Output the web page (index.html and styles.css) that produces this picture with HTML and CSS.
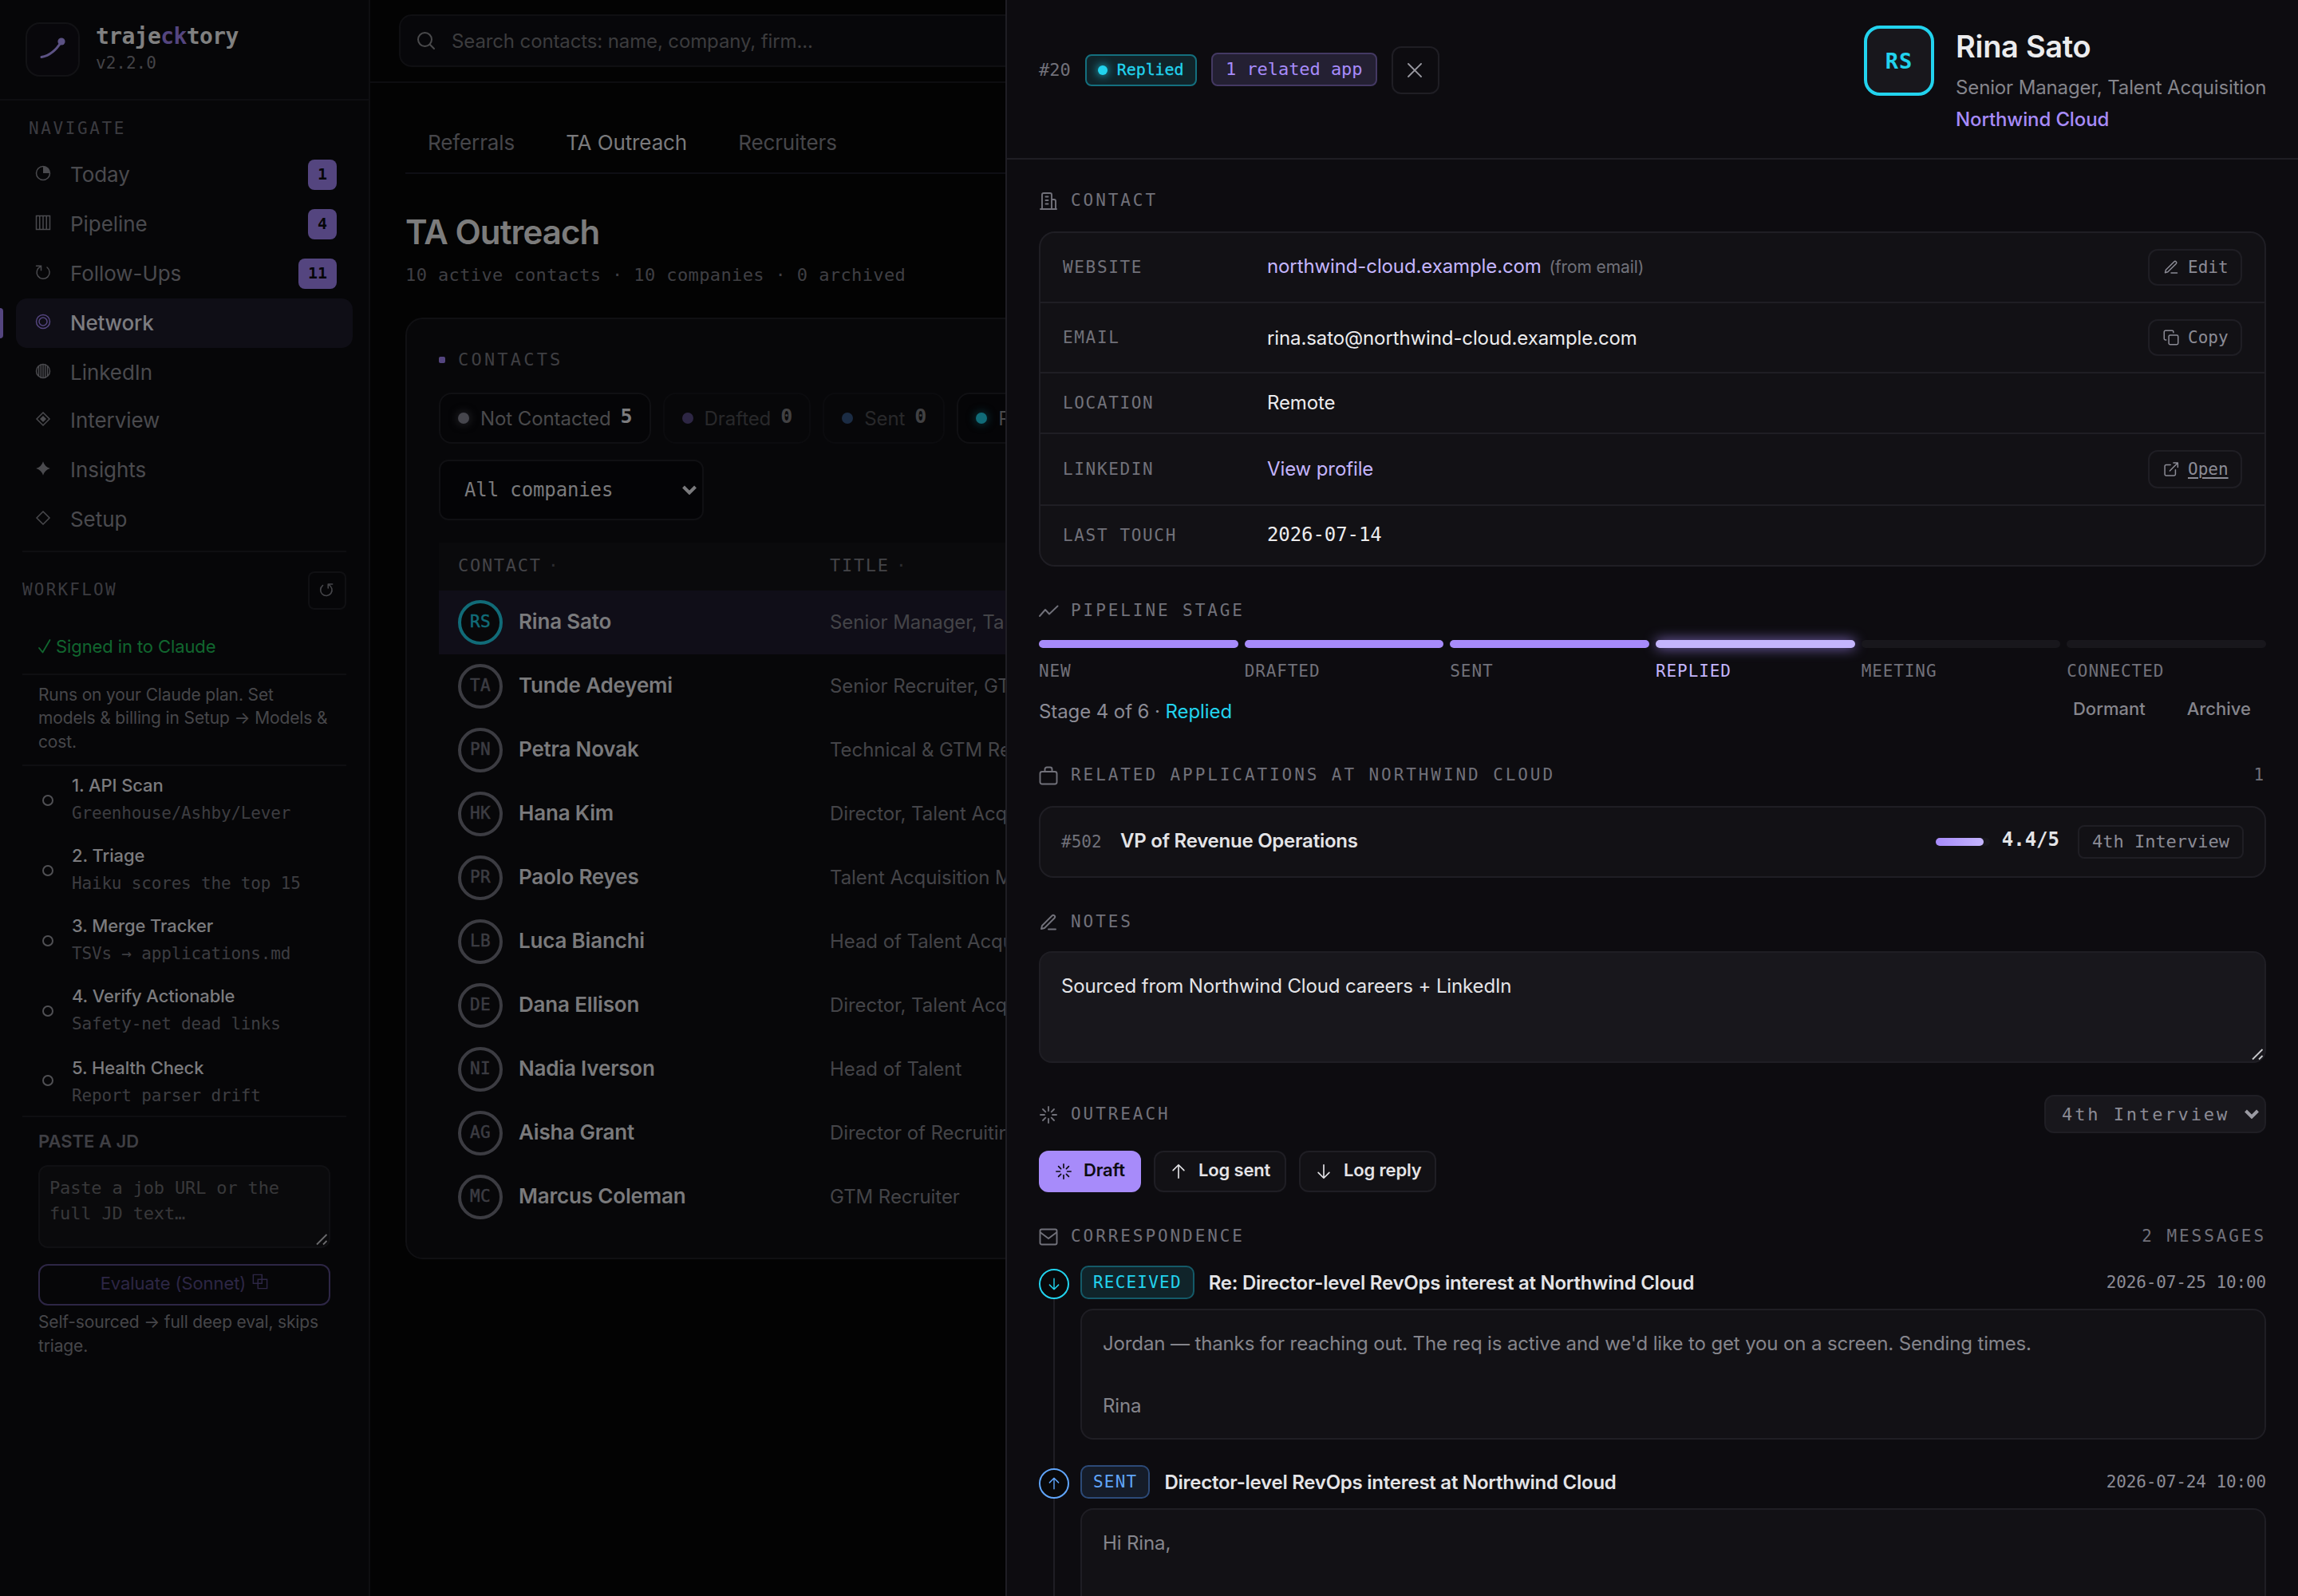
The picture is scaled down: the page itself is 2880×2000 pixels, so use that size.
FILE: index.html
```html
<!DOCTYPE html>
<html lang="en">
<head>
<meta charset="utf-8">
<title>trajecktory</title>
<link rel="stylesheet" href="styles.css">
</head>
<body>
<svg class="defs" width="0" height="0">
  <symbol id="i-edit" viewBox="0 0 24 24"><path d="M12 20.5h9M16.5 3.5a2.12 2.12 0 0 1 3 3L7 19l-4 1 1-4Z"/></symbol>
  <symbol id="i-copy" viewBox="0 0 24 24"><rect x="8.5" y="8.5" width="14" height="14" rx="2"/><path d="M4.5 15.5h-1a2 2 0 0 1-2-2v-10a2 2 0 0 1 2-2h10a2 2 0 0 1 2 2v1"/></symbol>
  <symbol id="i-open" viewBox="0 0 24 24"><path d="M18.5 13v6.5a2 2 0 0 1-2 2h-12a2 2 0 0 1-2-2v-12a2 2 0 0 1 2-2H11M15.500 2.500h6.500V9M10 14.500l12-12"/></symbol>
  <symbol id="i-spark" viewBox="0 0 24 24"><path d="M12 2v5M12 17v5M2 12h5M17 12h5M5 5l3.300 3.300M15.700 15.700L19 19M5 19l3.300-3.300M15.700 8.300L19 5"/></symbol>
  <symbol id="i-up" viewBox="0 0 24 24"><path d="M12 21V3M4.500 10.500L12 3l7.500 7.500"/></symbol>
  <symbol id="i-down" viewBox="0 0 24 24"><path d="M12 3v18M4.500 13.500L12 21l7.500-7.500"/></symbol>
  <symbol id="i-chevron" viewBox="0 0 18 12"><path d="M1.500 2l7.500 7.500L16.500 2"/></symbol>
  <symbol id="i-grip" viewBox="0 0 16 16"><path d="M2 14.500L14.500 2M10 14.500l4.500-4.500"/></symbol>
</svg>

<div class="app">
  <aside class="sidebar">
    <header class="brand">
      <div class="logo"><svg width="36" height="36" viewBox="0 0 36 36"><path d="M4 27.500C15 25.500 23 18 29 8" fill="none" stroke="currentColor" stroke-width="3" stroke-linecap="round"/><circle cx="29" cy="8" r="4.600" fill="currentColor"/></svg></div>
      <div class="brand-text">
        <div class="brand-name">traje<b>ck</b>tory</div>
        <div class="brand-version">v2.2.0</div>
      </div>
    </header>
    <div class="nav-label">NAVIGATE</div>
    <nav class="nav">
      <a class="nav-item"><svg viewBox="0 0 20 20"><circle cx="10" cy="10" r="8.500"/><path class="fill" d="M10 10V1.500A8.500 8.500 0 0 1 18.500 10Z"/></svg>Today<span class="badge">1</span></a>
      <a class="nav-item"><svg viewBox="0 0 20 20"><path d="M1.500 1.500h17v17h-17ZM5.750 1.500v17M10 1.500v17M14.250 1.500v17"/></svg>Pipeline<span class="badge">4</span></a>
      <a class="nav-item"><svg viewBox="0 0 20 20"><path d="M6.500 3.200A8 8 0 1 0 15 4M1.500 2.200h6v5.500"/></svg>Follow-Ups<span class="badge">11</span></a>
      <a class="nav-item active"><svg viewBox="0 0 20 20"><circle cx="10" cy="10" r="8.500"/><circle cx="10" cy="10" r="5"/></svg>Network</a>
      <a class="nav-item short"><svg viewBox="0 0 20 20"><circle cx="10" cy="10" r="8.500"/><path d="M4.500 4v12M7.300 2v16M10 1.500v17M12.700 2v16M15.500 4v12"/></svg>LinkedIn</a>
      <a class="nav-item"><svg viewBox="0 0 20 20"><path d="M10 2l8 8-8 8-8-8Z"/><path class="fill" d="M10 6l4 4-4 4L6 10Z"/></svg>Interview</a>
      <a class="nav-item"><svg viewBox="0 0 20 20"><path class="fill" d="M10 1.200Q12 8 18.800 10Q12 12 10 18.800Q8 12 1.200 10Q8 8 10 1.200Z"/><path class="fill" d="M10 5l5 5-5 5-5-5Z"/></svg>Insights</a>
      <a class="nav-item"><svg viewBox="0 0 20 20"><path d="M10 2l8 8-8 8-8-8Z"/></svg>Setup</a>
    </nav>
    <section class="workflow">
      <div class="wf-head"><span>WORKFLOW</span><button class="wf-refresh"><svg width="18" height="18" viewBox="0 0 20 20"><path d="M13.500 3.200A8 8 0 1 1 5 4M18.500 2.200h-6v5.500"/></svg></button></div>
      <div class="wf-status"><svg width="16" height="18" viewBox="0 0 16 18"><path d="M1 11l4.500 5.500L14.500 1"/></svg>Signed in to Claude</div>
      <p class="wf-note">Runs on your Claude plan. Set models &amp; billing in Setup → Models &amp; cost.</p>
      <ol class="steps">
        <li><i></i><div><b>1. API Scan</b><span>Greenhouse/Ashby/Lever</span></div></li>
        <li><i></i><div><b>2. Triage</b><span>Haiku scores the top 15</span></div></li>
        <li><i></i><div><b>3. Merge Tracker</b><span>TSVs → applications.md</span></div></li>
        <li><i></i><div><b>4. Verify Actionable</b><span>Safety-net dead links</span></div></li>
        <li><i></i><div><b>5. Health Check</b><span>Report parser drift</span></div></li>
      </ol>
      <div class="paste">
        <div class="paste-label">PASTE A JD</div>
        <div class="paste-box">Paste a job URL or the full JD text…<svg class="grip" width="16" height="16"><use href="#i-grip"/></svg></div>
        <button class="evaluate">Evaluate (Sonnet)<svg width="20" height="20" viewBox="0 0 22 22"><path d="M1.500 1.500h12v12h-12ZM8 8h12.500v12.500H8Z"/></svg></button>
        <p class="paste-note">Self-sourced → full deep eval, skips triage.</p>
      </div>
    </section>
  </aside>

  <main class="main">
    <header class="topbar">
      <div class="search"><svg width="24" height="24" viewBox="0 0 24 24"><circle cx="10.500" cy="10.500" r="8.500"/><path d="M16.800 16.800l5.200 5.200"/></svg>Search contacts: name, company, firm...</div>
    </header>
    <div class="content">
      <div class="tabs"><a>Referrals</a><a class="on">TA Outreach</a><a>Recruiters</a></div>
      <h1>TA Outreach</h1>
      <div class="subtitle">10 active contacts · 10 companies · 0 archived</div>
      <section class="card">
        <div class="card-head"><i></i>CONTACTS</div>
        <div class="chips">
          <div class="chip grey"><i></i>Not Contacted<b>5</b></div>
          <div class="chip violet dim"><i></i>Drafted<b>0</b></div>
          <div class="chip blue dim"><i></i>Sent<b>0</b></div>
          <div class="chip cyan"><i></i>Replied</div>
        </div>
        <div class="company-select">All companies<svg width="18" height="12"><use href="#i-chevron"/></svg></div>
        <div class="table">
          <div class="tr th"><span class="col">CONTACT<em>·</em></span><span class="col">TITLE<em>·</em></span></div>
          <div class="tr selected"><span class="who"><i>RS</i><b>Rina Sato</b></span><span class="role">Senior Manager, Talent</span></div>
          <div class="tr"><span class="who"><i>TA</i><b>Tunde Adeyemi</b></span><span class="role">Senior Recruiter, GTM</span></div>
          <div class="tr"><span class="who"><i>PN</i><b>Petra Novak</b></span><span class="role">Technical &amp; GTM Rec</span></div>
          <div class="tr"><span class="who"><i>HK</i><b>Hana Kim</b></span><span class="role">Director, Talent Acqui</span></div>
          <div class="tr"><span class="who"><i>PR</i><b>Paolo Reyes</b></span><span class="role">Talent Acquisition Ma</span></div>
          <div class="tr"><span class="who"><i>LB</i><b>Luca Bianchi</b></span><span class="role">Head of Talent Acqui</span></div>
          <div class="tr"><span class="who"><i>DE</i><b>Dana Ellison</b></span><span class="role">Director, Talent Acqui</span></div>
          <div class="tr"><span class="who"><i>NI</i><b>Nadia Iverson</b></span><span class="role">Head of Talent</span></div>
          <div class="tr"><span class="who"><i>AG</i><b>Aisha Grant</b></span><span class="role">Director of Recruiting</span></div>
          <div class="tr"><span class="who"><i>MC</i><b>Marcus Coleman</b></span><span class="role">GTM Recruiter</span></div>
        </div>
      </section>
    </div>
  </main>
</div>

<aside class="drawer">
  <header class="d-head">
    <div class="d-meta">
      <span class="d-id">#20</span>
      <span class="pill pill-replied"><i></i>Replied</span>
      <span class="pill pill-related">1 related app</span>
      <button class="close"><svg width="20" height="20" viewBox="0 0 20 20"><path d="M2 2l16 16M18 2L2 18"/></svg></button>
    </div>
    <div class="person">
      <div class="p-avatar">RS</div>
      <div class="p-text">
        <h2>Rina Sato</h2>
        <div class="p-role">Senior Manager, Talent Acquisition</div>
        <div class="p-company">Northwind Cloud</div>
      </div>
    </div>
  </header>

  <div class="d-body">
    <section>
      <div class="s-head"><svg viewBox="0 0 24 24"><path d="M4 22V4a2 2 0 0 1 2-2h8a2 2 0 0 1 2 2v18M16 10h3a2 2 0 0 1 2 2v10M2 22h20M8.500 6.500h3M8.500 11h3M8.500 15.500h3"/></svg>CONTACT</div>
      <div class="fields">
        <div class="field h86 high"><label>WEBSITE</label><div><a>northwind-cloud.example.com</a> <small>(from email)</small></div><button><svg><use href="#i-edit"/></svg>Edit</button></div>
        <div class="field h86 low"><label>EMAIL</label><div>rina.sato@northwind-cloud.example.com</div><button><svg><use href="#i-copy"/></svg>Copy</button></div>
        <div class="field h74"><label>LOCATION</label><div>Remote</div></div>
        <div class="field h88"><label>LINKEDIN</label><div><a>View profile</a></div><button class="tall"><svg><use href="#i-open"/></svg><u>Open</u></button></div>
        <div class="field h74 high"><label>LAST TOUCH</label><div class="mono">2026-07-14</div></div>
      </div>
    </section>

    <section>
      <div class="s-head tight"><svg viewBox="0 0 24 24"><path d="M1 18l7-8 5 5.500L23.500 5.500"/></svg>PIPELINE STAGE</div>
      <div class="stages">
        <div class="stage done"><i></i>NEW</div>
        <div class="stage done"><i></i>DRAFTED</div>
        <div class="stage done"><i></i>SENT</div>
        <div class="stage now"><i></i>REPLIED</div>
        <div class="stage"><i></i>MEETING</div>
        <div class="stage"><i></i>CONNECTED</div>
      </div>
      <div class="stage-foot"><span>Stage 4 of 6 · <b>Replied</b></span><div class="ghosts"><button>Dormant</button><button>Archive</button></div></div>
    </section>

    <section>
      <div class="s-head"><svg viewBox="0 0 24 24"><rect x="1.500" y="7" width="21" height="15.500" rx="2.500"/><path d="M7.500 7V4a2.500 2.500 0 0 1 2.500-2.500h4A2.500 2.500 0 0 1 16.500 4v3"/></svg>RELATED APPLICATIONS AT NORTHWIND CLOUD<span class="count">1</span></div>
      <div class="related">
        <span class="r-id">#502</span><b class="r-title">VP of Revenue Operations</b>
        <div class="meter"><i style="width:88%"></i></div><b class="score">4.4/5</b><span class="r-stage">4th Interview</span>
      </div>
    </section>

    <section>
      <div class="s-head tight"><svg><use href="#i-edit"/></svg>NOTES</div>
      <div class="notes">Sourced from Northwind Cloud careers + LinkedIn<svg class="grip" width="16" height="16"><use href="#i-grip"/></svg></div>
    </section>

    <section>
      <div class="s-head tight tall"><svg><use href="#i-spark"/></svg>OUTREACH<span class="stage-select">4th Interview<svg width="18" height="12"><use href="#i-chevron"/></svg></span></div>
      <div class="actions">
        <button class="primary"><svg><use href="#i-spark"/></svg>Draft</button>
        <button class="sent"><svg><use href="#i-up"/></svg>Log sent</button>
        <button class="reply"><svg><use href="#i-down"/></svg>Log reply</button>
      </div>
    </section>

    <section>
      <div class="s-head tight"><svg viewBox="0 0 24 24"><rect x="1.500" y="2.500" width="21" height="19" rx="2"/><path d="M2 6.500l10 7.500 10-7.500"/></svg>CORRESPONDENCE<span class="count">2 MESSAGES</span></div>
      <ul class="thread">
        <li class="in">
          <div class="rail"><span><svg><use href="#i-down"/></svg></span></div>
          <div class="msg">
            <div class="m-head"><span class="tag">RECEIVED</span><b>Re: Director-level RevOps interest at Northwind Cloud</b><time>2026-07-25 10:00</time></div>
            <div class="m-body">Jordan — thanks for reaching out. The req is active and we'd like to get you on a screen. Sending times.

Rina</div>
          </div>
        </li>
        <li class="out">
          <div class="rail"><span><svg><use href="#i-up"/></svg></span></div>
          <div class="msg">
            <div class="m-head"><span class="tag">SENT</span><b>Director-level RevOps interest at Northwind Cloud</b><time>2026-07-24 10:00</time></div>
            <div class="m-body long">Hi Rina,</div>
          </div>
        </li>
      </ul>
    </section>
  </div>
</aside>
</body>
</html>
```
FILE: styles.css
```css
* { box-sizing: border-box; }

:root {
  --sans: Inter, "Liberation Sans", sans-serif;
  --mono: "DejaVu Sans Mono", "Liberation Mono", monospace;
  --line: #1f1e24;
  --muted: #8b8b95;
  --faint: #71717a;
  --violet: #a78bfa;
  --lilac: #c4b5fd;
  --cyan: #22d3ee;
  --blue: #60a5fa;
}

body {
  margin: 0;
  width: 2880px;
  height: 2000px;
  overflow: hidden;
  background: #030303;
  font-family: var(--sans);
  font-size: 24px;
  color: #e4e4e7;
  position: relative;
}

h1, h2, p, ol, ul { margin: 0; padding: 0; font-weight: inherit; }
ul, ol { list-style: none; }
i, em { font-style: normal; }
svg { fill: none; stroke: currentColor; stroke-width: 1.8; stroke-linecap: round; stroke-linejoin: round; flex: none; overflow: visible; }
svg .fill { fill: currentColor; stroke: none; }
button { margin: 0; padding: 0; border: 0; background: none; font: inherit; color: inherit; }
.defs { position: absolute; }
.mono { font-family: var(--mono); }

.app { display: flex; height: 2000px; }

/* sidebar */
.sidebar { width: 464px; flex: none; background: #060608; border-right: 2px solid #0e0e11; }
.brand { height: 126px; padding: 28px 32px; display: flex; gap: 20px; border-bottom: 2px solid #0e0e11; }
.logo { width: 68px; height: 68px; border: 2px solid #121215; border-radius: 18px; background: #08070b; color: #5c5284; display: flex; align-items: center; justify-content: center; }
.logo svg { stroke: none; }
.brand-name { font: bold 28px/36px var(--mono); letter-spacing: -0.62px; color: #808080; }
.brand-name b { color: #54457f; }
.brand-version { font: 21px/28px var(--mono); margin-top: 1px; color: #434347; }
.nav-label { font: 21px/30px var(--mono); letter-spacing: 2.600px; padding: 20px 36px 12px; color: #3b3b40; }
.nav { padding: 0 20px; }
.nav-item { height: 62px; padding: 0 20px 2px 24px; display: flex; align-items: center; gap: 24px; font-size: 26px; letter-spacing: -0.060px; color: #4a4a4e; border-radius: 14px; position: relative; }
.nav-item.short { height: 60px; padding-bottom: 0; }
.nav-item svg { width: 20px; height: 20px; stroke-width: 1.500; margin-bottom: 2px; stroke-linejoin: miter; }
.nav-item.active { background: #0f0e16; color: #7c7c80; font-weight: 500; letter-spacing: -0.200px; }
.nav-item.active svg { color: #54457f; }
.nav-item.active::before { content: ""; position: absolute; left: -20px; top: 12px; width: 4px; height: 38px; background: #54457f; border-radius: 0 4px 4px 0; }
.badge { margin: 2px 0 0 auto; height: 38px; padding: 0 12px; border-radius: 8px; background: #54457f; color: #060608; font: bold 20px/36px var(--mono); letter-spacing: 0; }

.workflow { margin: 8px 28px 0; border-top: 2px solid #0e0e11; }
.wf-head { padding-top: 24px; display: flex; justify-content: space-between; align-items: center; font: 21px/43px var(--mono); letter-spacing: 2.200px; color: #3b3b40; }
.wf-head span { padding-bottom: 1px; }
.wf-refresh { width: 48px; height: 48px; padding: 0 2px 2px 0; border: 2px solid #101013; border-radius: 8px; display: flex; align-items: center; justify-content: center; color: #46464a; }
.wf-status { margin-top: 10px; height: 72px; padding: 2px 20px 0; border-bottom: 2px solid #0e0e11; display: flex; align-items: center; gap: 6px; font-size: 22px; letter-spacing: -0.100px; color: #11662f; }
.wf-note { padding: 10px 20px 14px; border-bottom: 2px solid #0e0e11; font-size: 21px; line-height: 29.400px; letter-spacing: -0.140px; color: #46464a; }
.steps li { height: 88px; padding: 7px 0 0 25px; display: flex; gap: 23px; }
.steps li:last-child { padding-top: 9px; }
.steps i { width: 14px; height: 14px; margin-top: 29px; border: 2px solid #505054; border-radius: 50%; }
.steps li:last-child i { margin-top: 26px; }
.steps b { display: block; font-size: 22px; line-height: 34px; font-weight: 500; letter-spacing: -0.120px; color: #7b7b7e; }
.steps span { display: block; font: 21px/36px var(--mono); letter-spacing: -0.180px; color: #3d3d41; }
.paste { padding: 13px 20px 0; border-top: 2px solid #0e0e11; margin-top: -2px; }
.paste-label { font-size: 22px; line-height: 34px; font-weight: 600; color: #3f3f44; }
.paste-box { margin-top: 13px; height: 104px; padding: 11px 12px; border: 2px solid #101013; border-radius: 12px; background: #0a0a0c; font: 22px/32px var(--mono); letter-spacing: -0.160px; color: #38383a; position: relative; }
.grip { position: absolute; right: 1px; bottom: 1px; color: #6b6b6e; stroke-linecap: butt; }
.evaluate { margin-top: 20px; width: 366px; height: 52px; border: 2px solid #2d2645; border-radius: 12px; display: flex; align-items: center; justify-content: center; gap: 8px; padding-bottom: 4px; font-size: 22px; letter-spacing: -0.080px; color: #2d2645; }
.evaluate svg { stroke-width: 1.600; stroke-linejoin: miter; margin-bottom: 4px; }
.paste-note { margin-top: 6px; font-size: 21px; line-height: 30px; letter-spacing: -0.160px; color: #46464a; }

/* main column */
.main { flex: 1; min-width: 0; }
.topbar { height: 104px; padding: 18px 36px; border-bottom: 2px solid #0d0d10; }
.search { height: 66px; padding: 0 20px; border: 2px solid #0f0f12; border-radius: 16px; background: #07070a; display: flex; align-items: center; gap: 20px; font-size: 24px; letter-spacing: -0.120px; color: #3c3c3e; }
.search svg { color: #4a4a4c; stroke-width: 2; }
.content { padding: 36px 44px 0; }
.tabs { height: 78px; border-bottom: 2px solid #0e0e14; display: flex; align-items: center; gap: 8px; font-size: 26px; letter-spacing: -0.110px; color: #46464a; }
.tabs a { padding: 0 28px; }
.tabs .on { color: #7a7a7c; }
h1 { margin-top: 48px; font-size: 42px; line-height: 50px; font-weight: 600; letter-spacing: -0.900px; color: #7c7c7c; }
.subtitle { margin: 13px 0 37px; font: 22px/32px var(--mono); letter-spacing: 0.390px; color: #3f3f43; }
.card { height: 1180px; padding: 34px 40px 0; border: 2px solid #101013; border-radius: 22px; background: #070709; }
.card-head { display: flex; align-items: center; gap: 16px; font: 22px/34px var(--mono); letter-spacing: 3.200px; color: #3f3f43; }
.card-head i { width: 8px; height: 8px; border-radius: 2px; background: #54457f; }
.chips { margin-top: 24px; display: flex; gap: 15px; }
.chip { height: 64px; padding: 0 21px 0 22px; display: flex; align-items: center; gap: 12px; border: 2px solid #101013; border-radius: 16px; background: #050507; white-space: nowrap; letter-spacing: -0.080px; color: #4a4a4c; }
.chip i { width: 14px; height: 14px; margin-right: 2px; border-radius: 50%; }
.chip b { font: bold 25px/60px var(--mono); padding-bottom: 5px; color: #7c7c7e; }
.chip.dim { opacity: .5; background: none; }
.grey i { background: #46464d; box-shadow: 0 0 12px #2e2e33; }
.violet i { background: #54457f; }
.blue i { background: #305280; }
.cyan i { background: #116b78; box-shadow: 0 0 12px #0b4650; }
.company-select { margin-top: 20px; width: 332px; height: 76px; padding: 0 7px 0 30px; display: flex; align-items: center; justify-content: space-between; border: 2px solid #101013; border-radius: 12px; background: #040406; font: 24px/72px var(--mono); letter-spacing: -0.120px; color: #7a7a7c; }
.company-select svg { stroke-width: 4; stroke-linecap: butt; stroke-linejoin: miter; }
.table { margin-top: 28px; }
.tr { height: 80px; padding: 0 24px 3px; display: grid; grid-template-columns: 466px 1fr; align-items: center; font-size: 24px; color: #444448; white-space: nowrap; }
.role { padding-top: 1px; letter-spacing: -0.060px; }
.th { height: 60px; background: #0a0a0c; font: 22px/54px var(--mono); letter-spacing: 1.700px; color: #444448; }
.col { display: flex; gap: 8px; }
.th em { color: #2c2c30; }
.selected { background: #100e18; }
.who { display: flex; align-items: center; gap: 20px; }
.who i { width: 56px; height: 56px; border: 4px solid #3c3c42; border-radius: 50%; margin-top: 3px; text-align: center; font: 21px/46px var(--mono); letter-spacing: 0.400px; -webkit-text-stroke: 0.500px; color: #3c3c42; }
.who b { font-size: 26px; font-weight: 600; letter-spacing: -0.180px; color: #7a7a7c; }
.selected .who i { border-color: #116b78; color: #116b78; background: #08080a; }

/* contact drawer */
.drawer { position: absolute; top: 0; right: 0; width: 1620px; height: 2000px; overflow: hidden; background: #0d0c10; border-left: 2px solid var(--line); }
.d-head { height: 200px; padding: 32px 40px 0; border-bottom: 2px solid var(--line); display: flex; justify-content: space-between; }
.d-meta { height: 112px; display: flex; align-items: center; gap: 18px; }
.d-id { font: 22px/40px var(--mono); color: var(--faint); }
.pill { border: 2px solid; border-radius: 8px; font-family: var(--mono); }
.pill-replied { width: 140px; height: 40px; padding: 0 0 2px 14px; display: flex; align-items: center; gap: 12px; font-size: 20px; letter-spacing: -0.080px; -webkit-text-stroke: 0.300px; color: var(--cyan); border-color: #146f7e; background: #10242a; }
.pill-replied i { width: 12px; height: 12px; margin-top: 2px; border-radius: 50%; background: var(--cyan); box-shadow: 0 0 12px var(--cyan); }
.pill-related { width: 208px; height: 42px; margin-top: -2px; text-align: center; font-size: 22px; line-height: 38px; letter-spacing: -0.060px; color: var(--violet); border-color: #443963; background: #242033; }
.close { width: 60px; height: 60px; border: 2px solid var(--line); border-radius: 12px; display: flex; align-items: center; justify-content: center; padding-right: 1px; color: #9a9aa2; }
.person { display: flex; gap: 27px; }
.p-avatar { width: 88px; height: 88px; border: 4px solid var(--cyan); border-radius: 20px; background: #18171c; color: var(--cyan); text-align: center; font: bold 27px/81px var(--mono); letter-spacing: 1px; }
.p-text { width: 389px; white-space: nowrap; }
.p-text h2 { margin-top: 3px; font-size: 38px; line-height: 46px; font-weight: 600; letter-spacing: -0.300px; color: #ececee; }
.p-role { margin-top: 11px; line-height: 36px; letter-spacing: -0.130px; color: #85858c; }
.p-company { margin-top: 4px; line-height: 36px; font-weight: 500; letter-spacing: -0.120px; color: var(--violet); }

.d-body { padding: 36px 40px 0; display: flex; flex-direction: column; gap: 40px; }
.s-head { height: 30px; margin-bottom: 24px; display: flex; align-items: center; font: 21px/30px var(--mono); letter-spacing: 2.920px; color: var(--faint); }
.s-head > svg { width: 24px; height: 24px; margin: 2px 16px 0 0; stroke-width: 1.900; }
.s-head.tight { margin-bottom: 22px; }
.s-head.tall { height: 48px; line-height: 29px; }
.s-head .count { margin-left: auto; }

.fields { height: 420px; border: 2px solid var(--line); border-radius: 20px; background: #121115; }
.field { padding: 0 28px; display: flex; align-items: center; box-sizing: content-box; }
.field + .field { border-top: 2px solid var(--line); }
.h74 { height: 74px; } .h86 { height: 86px; } .h88 { height: 88px; }
.field label { width: 256px; font: 21px/30px var(--mono); letter-spacing: 1.650px; color: var(--faint); }
.field > div { flex: 1; letter-spacing: -0.110px; line-height: 36px; color: #ececee; }
.field > div.mono { letter-spacing: -0.080px; }
.field.low > div { padding-top: 2px; }
.field.high > div { padding-bottom: 2px; }
.field a { color: var(--lilac); margin-right: 3px; }
.field small { font-size: 21px; color: var(--faint); }
.field button { width: 118px; height: 46px; padding-left: 17px; display: flex; align-items: center; gap: 11px; border: 2px solid var(--line); border-radius: 12px; font: 21px/42px var(--mono); color: var(--muted); }
.field button.tall { height: 48px; }
.field button svg { width: 20px; height: 20px; }
.field u { text-underline-offset: 3px; text-decoration-thickness: 2px; }

.stages { display: grid; grid-template-columns: repeat(6, 1fr); gap: 8px; }
.stage { font: 21px/28px var(--mono); letter-spacing: 0.900px; color: var(--faint); }
.stage i { display: block; height: 10px; margin-bottom: 15px; border-radius: 5px; background: #18171c; }
.stage.done i { background: var(--violet); }
.stage.now { color: var(--lilac); }
.stage.now i { background: var(--lilac); box-shadow: 0 0 16px rgba(167, 139, 250, .8); }
.stage-foot { height: 48px; margin-top: 13px; display: flex; align-items: center; justify-content: space-between; color: var(--muted); }
.stage-foot > span { padding-bottom: 2px; letter-spacing: -0.090px; }
.stage-foot b { font-weight: 400; color: var(--cyan); }
.ghosts { display: flex; gap: 12px; margin-right: -1px; padding-bottom: 8px; font-size: 22px; font-weight: 500; color: #85858c; }
.ghosts button { padding: 0 20px; }

.related { height: 90px; padding: 0 26px; display: flex; align-items: center; border: 2px solid var(--line); border-radius: 18px; background: #121115; }
.r-id { width: 74px; font: 21px/30px var(--mono); color: var(--faint); }
.r-title { flex: 1; padding-bottom: 3px; font-weight: 600; letter-spacing: -0.240px; }
.meter { width: 68px; height: 10px; border-radius: 5px; background: #18171c; }
.meter i { display: block; height: 10px; border-radius: 5px; background: linear-gradient(90deg, var(--violet), var(--lilac)); }
.score { margin: 0 23px 0 15px; padding-bottom: 6px; font: bold 24px/30px var(--mono); }
.r-stage { width: 208px; height: 42px; border: 2px solid var(--line); border-radius: 8px; text-align: center; font: 22px/38px var(--mono); color: var(--muted); }

.notes { height: 140px; padding: 22px 26px; border: 2px solid var(--line); border-radius: 16px; background: #18171c; line-height: 40px; letter-spacing: -0.130px; position: relative; }
.notes .grip { color: #c8c8cc; }

.stage-select { margin-left: auto; width: 278px; height: 48px; padding: 0 7px 0 20px; display: flex; align-items: center; justify-content: space-between; border: 2px solid var(--line); border-radius: 12px; background: #18171c; font-size: 22px; color: var(--muted); }
.stage-select svg { stroke-width: 4; stroke-linecap: butt; stroke-linejoin: miter; color: #9a9aa2; }

.actions { display: flex; gap: 16px; }
.actions button { width: 128px; height: 52px; padding: 0 0 4px 18px; display: flex; align-items: center; gap: 14px; border: 2px solid var(--line); border-radius: 12px; background: #121115; font-size: 22px; font-weight: 600; letter-spacing: -0.160px; white-space: nowrap; color: #e4e4e7; }
.actions .sent { width: 166px; }
.actions .reply { width: 172px; }
.actions svg { width: 22px; height: 22px; margin-top: 4px; stroke-width: 1.800; }
.actions .primary { border-color: var(--violet); background: var(--violet); color: #0d0c10; }

.thread li { display: grid; grid-template-columns: 38px 1fr; gap: 14px; }
.rail { display: flex; flex-direction: column; align-items: center; padding-top: 4px; }
.rail span { width: 38px; height: 38px; border: 2px solid; border-radius: 50%; background: #08080a; display: flex; align-items: center; justify-content: center; }
.rail svg { width: 18px; height: 18px; stroke-width: 1.900; }
.rail::after { content: ""; flex: 1; width: 2px; margin-bottom: -4px; background: var(--line); }
.in .rail span, .in .tag { color: var(--cyan); }
.out .rail span, .out .tag { color: var(--blue); }
.msg { padding-bottom: 32px; }
.m-head { height: 42px; display: flex; align-items: center; }
.tag { height: 42px; padding: 0 14px 0 14px; margin-right: 18px; border: 2px solid; border-radius: 10px; font: 21px/38px var(--mono); letter-spacing: 1.200px; }
.in .tag { border-color: #145a68; background: #10242a; }
.out .tag { border-color: #2c4a78; background: #151c29; }
.m-head b { flex: 1; font-weight: 600; letter-spacing: -0.250px; }
.m-head time { font: 21px/42px var(--mono); letter-spacing: -0.120px; color: var(--muted); }
.m-body { margin-top: 12px; padding: 22px 26px 21px; border: 2px solid var(--line); border-radius: 16px; background: #121115; line-height: 39px; letter-spacing: -0.130px; white-space: pre-wrap; color: #85858c; }
.m-body.long { height: 320px; }
```
